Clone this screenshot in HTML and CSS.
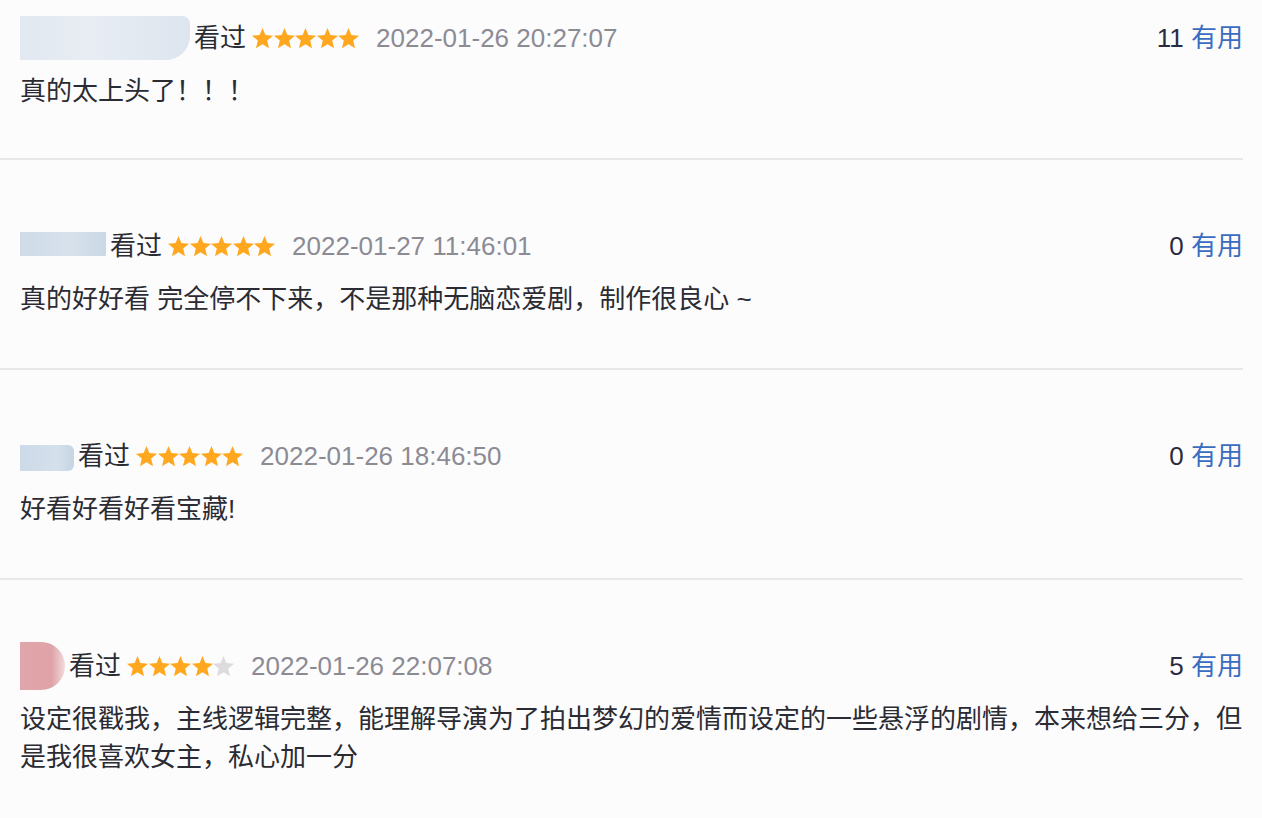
FILE: index.html
```html
<!DOCTYPE html>
<html lang="zh-CN">
<head>
  <meta charset="UTF-8">
  <meta name="viewport" content="width=device-width, initial-scale=1.0">
  <title>短评</title>
  <link rel="stylesheet" href="styles.css">
</head>
<body>
  <svg width="0" height="0" class="defs">
    <defs>
      <polygon id="star" points="12,1 15,8.4 23,9 16.9,14.2 18.8,22.2 12,17.9 5.2,22.2 7.1,14.2 1,9 9,8.4"/>
    </defs>
  </svg>

  <div class="comments">
    <div class="comment first">
      <div class="comment-head">
        <span class="user blur-a"></span>
        <span class="status">看过</span>
        <span class="stars">
          <svg viewBox="0 0 24 24"><use href="#star"/></svg><svg viewBox="0 0 24 24"><use href="#star"/></svg><svg viewBox="0 0 24 24"><use href="#star"/></svg><svg viewBox="0 0 24 24"><use href="#star"/></svg><svg viewBox="0 0 24 24"><use href="#star"/></svg>
        </span>
        <span class="time">2022-01-26 20:27:07</span>
        <span class="votes"><span class="count">11</span> <a href="#">有用</a></span>
      </div>
      <p class="comment-text">真的太上头了！！！</p>
    </div>

    <div class="comment">
      <div class="comment-head">
        <span class="user blur-b"></span>
        <span class="status">看过</span>
        <span class="stars">
          <svg viewBox="0 0 24 24"><use href="#star"/></svg><svg viewBox="0 0 24 24"><use href="#star"/></svg><svg viewBox="0 0 24 24"><use href="#star"/></svg><svg viewBox="0 0 24 24"><use href="#star"/></svg><svg viewBox="0 0 24 24"><use href="#star"/></svg>
        </span>
        <span class="time">2022-01-27 11:46:01</span>
        <span class="votes"><span class="count">0</span> <a href="#">有用</a></span>
      </div>
      <p class="comment-text">真的好好看 完全停不下来，不是那种无脑恋爱剧，制作很良心 ~</p>
    </div>

    <div class="comment">
      <div class="comment-head">
        <span class="user blur-c"></span>
        <span class="status">看过</span>
        <span class="stars">
          <svg viewBox="0 0 24 24"><use href="#star"/></svg><svg viewBox="0 0 24 24"><use href="#star"/></svg><svg viewBox="0 0 24 24"><use href="#star"/></svg><svg viewBox="0 0 24 24"><use href="#star"/></svg><svg viewBox="0 0 24 24"><use href="#star"/></svg>
        </span>
        <span class="time">2022-01-26 18:46:50</span>
        <span class="votes"><span class="count">0</span> <a href="#">有用</a></span>
      </div>
      <p class="comment-text">好看好看好看宝藏!</p>
    </div>

    <div class="comment last">
      <div class="comment-head">
        <span class="user blur-d"></span>
        <span class="status">看过</span>
        <span class="stars">
          <svg viewBox="0 0 24 24"><use href="#star"/></svg><svg viewBox="0 0 24 24"><use href="#star"/></svg><svg viewBox="0 0 24 24"><use href="#star"/></svg><svg viewBox="0 0 24 24"><use href="#star"/></svg><svg viewBox="0 0 24 24" class="off"><use href="#star"/></svg>
        </span>
        <span class="time">2022-01-26 22:07:08</span>
        <span class="votes"><span class="count">5</span> <a href="#">有用</a></span>
      </div>
      <p class="comment-text">设定很戳我，主线逻辑完整，能理解导演为了拍出梦幻的爱情而设定的一些悬浮的剧情，本来想给三分，但是我很喜欢女主，私心加一分</p>
    </div>
  </div>
</body>
</html>
```

FILE: styles.css
```css
html {
  box-sizing: border-box;
  background: #fcfcfd;
}
*, *:before, *:after {
  box-sizing: inherit;
}
body {
  margin: 0;
  padding: 0;
  color: #2b2b33;
  font-family: "Liberation Sans", "Noto Sans CJK SC", sans-serif;
  font-size: 26px;
  -webkit-font-smoothing: antialiased;
}

.defs {
  position: absolute;
}

.comments {
  width: 1243px;
}

.comment {
  padding: 66px 0 50px 20px;
  border-bottom: 2px solid #e8e8ea;
}
.comment.first {
  padding-top: 18px;
  padding-bottom: 48px;
}
.comment.last {
  border-bottom: none;
}

.comment-head {
  display: flex;
  align-items: center;
  height: 40px;
  line-height: 40px;
}

.user {
  flex: none;
  margin-right: 4px;
  background: linear-gradient(90deg, #e2e8f0, #e8edf4 40%, #dde5ee);
}
.blur-a {
  width: 170px;
  height: 44px;
  border-radius: 0 8px 24px 0;
}
.blur-b {
  width: 86px;
  height: 24px;
  margin-top: -4px;
  background: linear-gradient(90deg, #cfdbe8, #d6e1ec 60%, #cad8e6);
}
.blur-c {
  width: 54px;
  height: 26px;
  margin-top: 4px;
  border-radius: 0 6px 6px 0;
  background: linear-gradient(90deg, #cddae7, #d4e0ec 70%, #c6d5e4);
}
.blur-d {
  width: 45px;
  height: 48px;
  border-radius: 0 24px 24px 0;
  background: linear-gradient(90deg, #e1a6ab, #dea2a7 70%, #f2dadb);
}

.status {
  color: #2b2b33;
}

.stars {
  display: flex;
  margin-left: 5px;
}
.stars svg {
  width: 23px;
  height: 23px;
  margin-right: -1.4px;
  fill: #ffa81f;
}
.stars svg.off {
  fill: #dcdcdf;
}

.time {
  margin-left: 17px;
  color: #8c8b94;
}

.votes {
  margin-left: auto;
}
.count {
  color: #2a2a40;
}
.votes a {
  color: #3a6cbf;
  text-decoration: none;
}

.comment-text {
  margin: 14px 0 0;
  line-height: 38px;
  color: #2b2b33;
}
```
